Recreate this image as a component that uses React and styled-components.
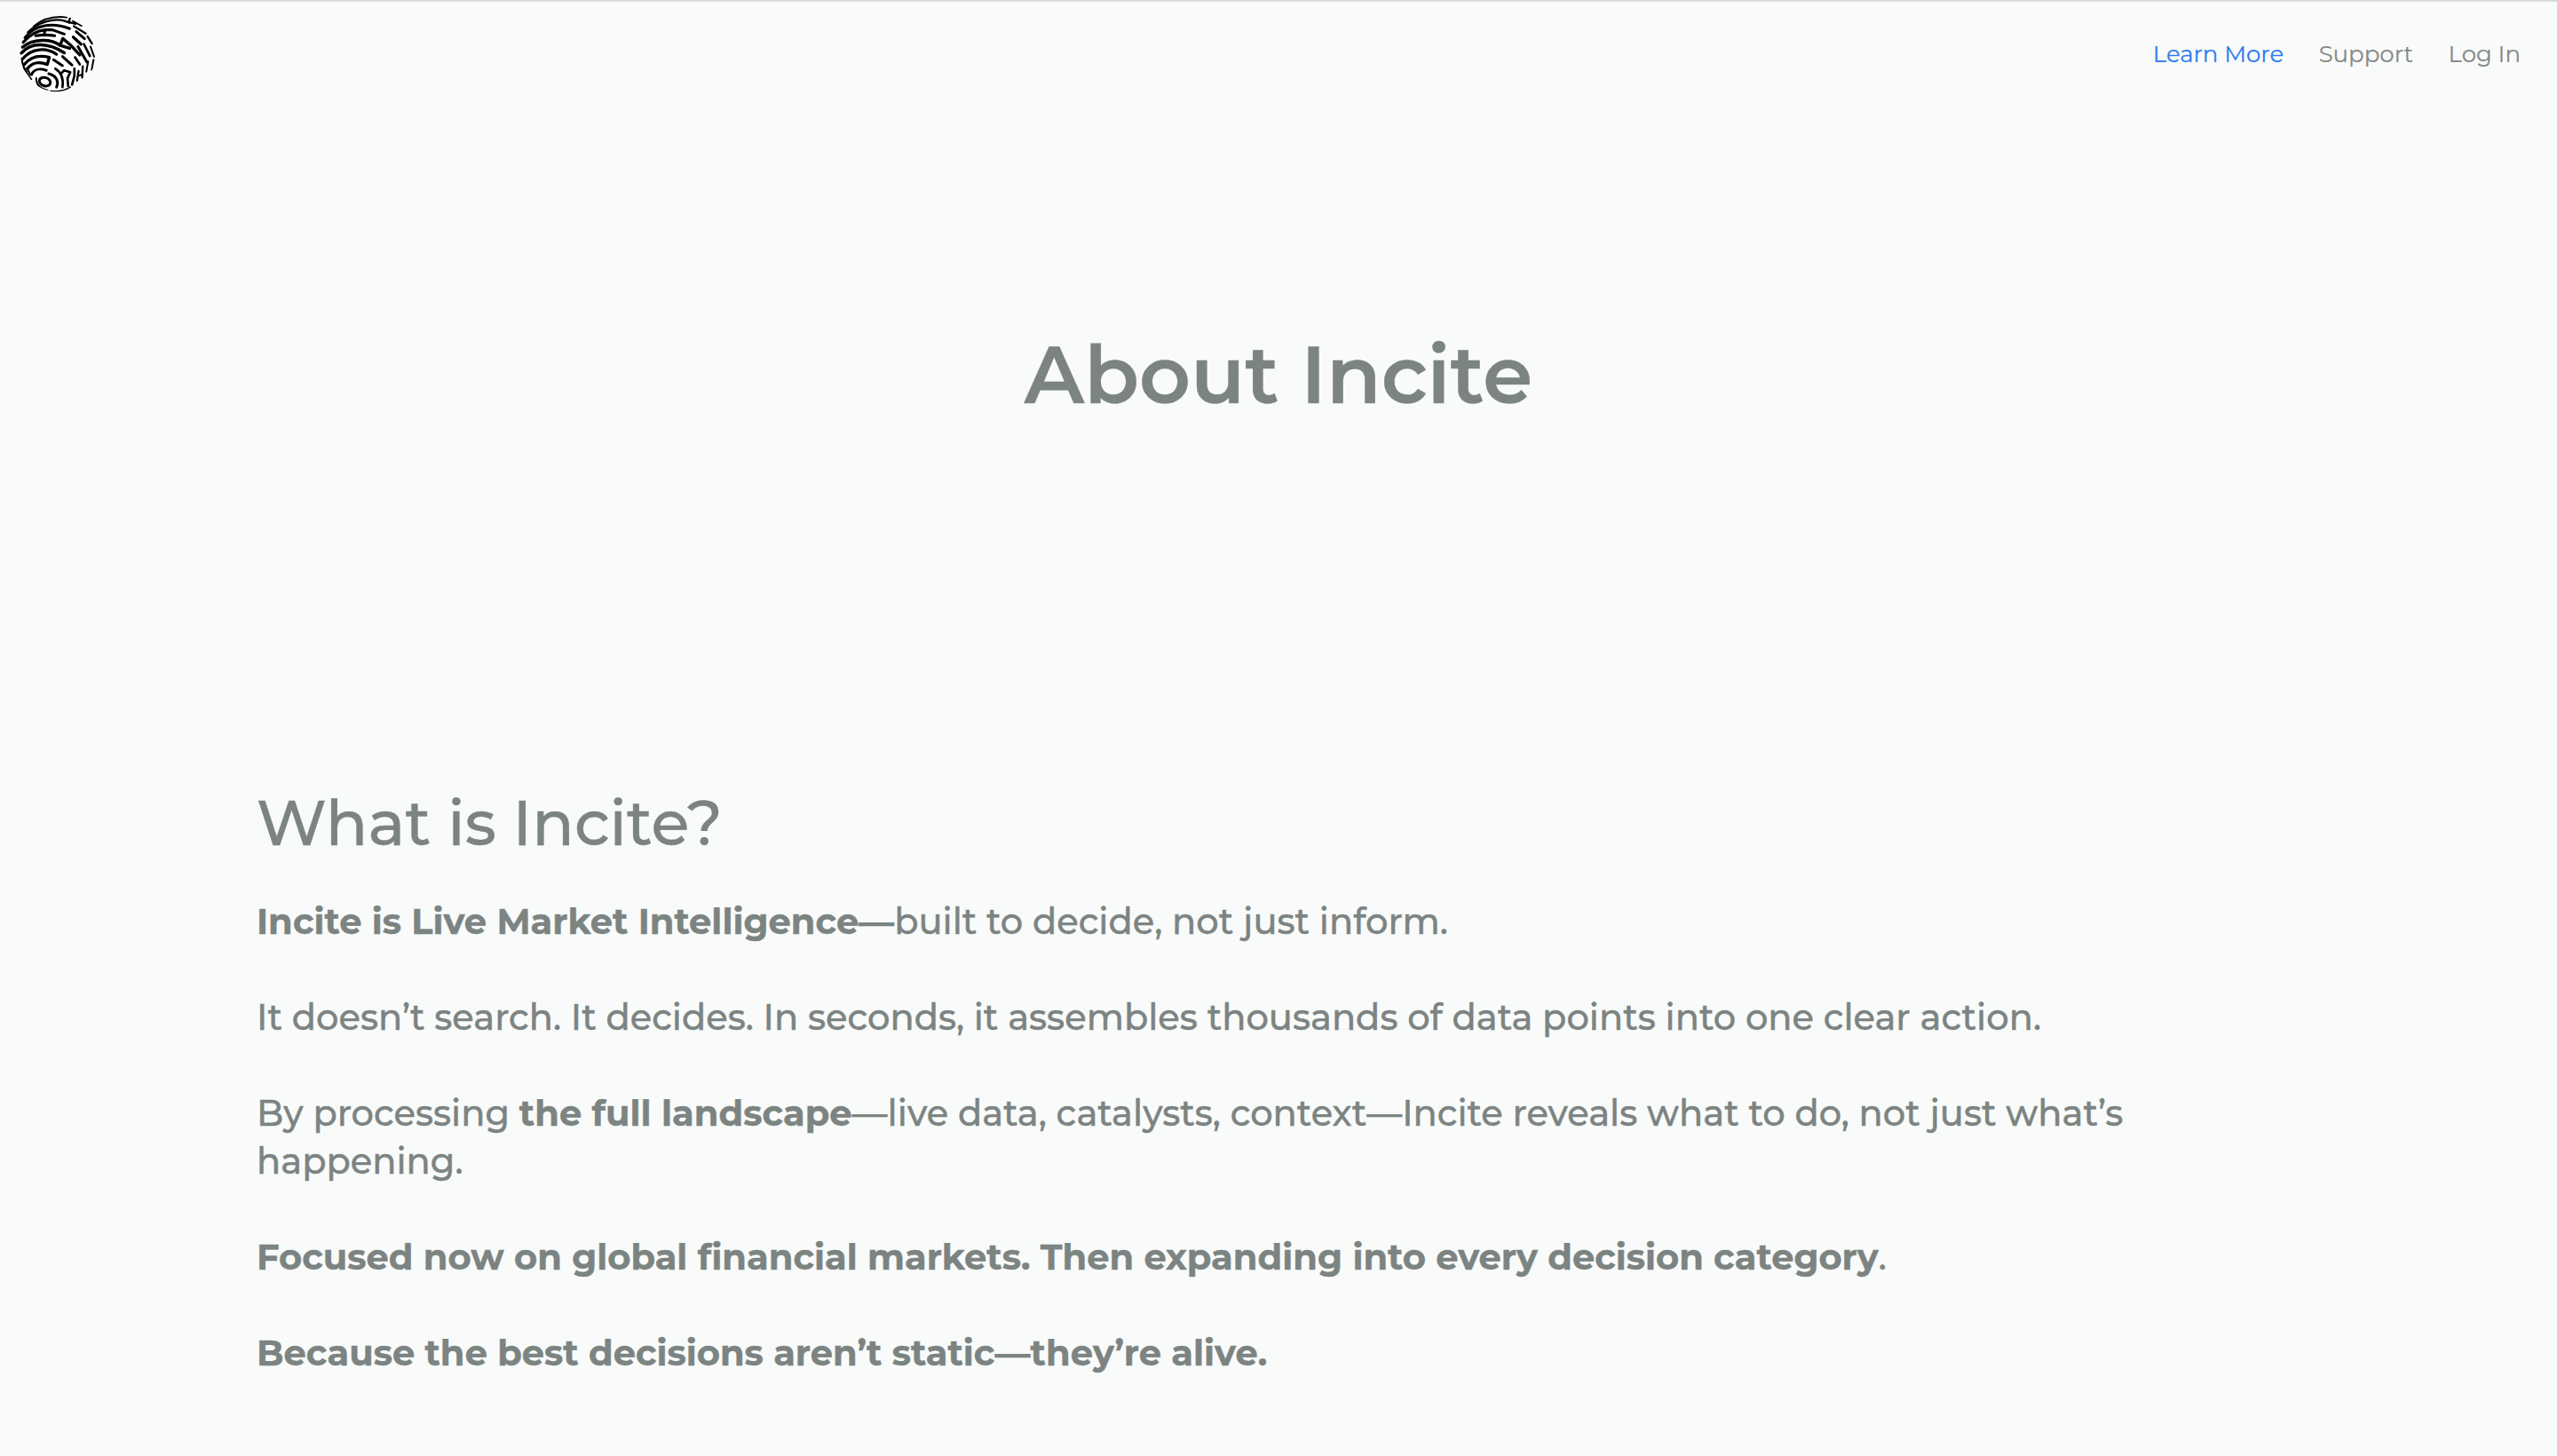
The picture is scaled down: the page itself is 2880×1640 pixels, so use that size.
import styled, { createGlobalStyle } from 'styled-components';

const strokes = [
    // top bands
    ['M84 88 C112 64 152 53 194 58', 6],
    ['M64 108 C98 74 150 60 188 70 L204 76', 7],
    ['M206 58 L201 74 L224 80', 7],
    ['M54 126 C88 82 146 74 204 96', 9],
    ['M48 142 C72 114 98 102 124 100 L146 100 L186 114', 9],
    ['M122 100 L118 118', 9],
    ['M90 120 C112 116 132 116 154 120', 9],
    ['M46 158 C80 130 140 128 172 152 L204 162', 10],
    ['M172 152 L181 129 L206 150 L238 184', 10],
    ['M42 178 C76 138 136 144 186 177', 10],
    ['M46 198 C78 158 128 160 160 182', 10],
    // lower left bands
    ['M52 216 C74 188 104 184 136 192 L129 216 C108 208 84 204 62 230', 10],
    ['M76 250 C84 232 104 228 126 236', 9],
    ['M44 196 C44 212 50 226 60 242', 6],
    ['M50 228 L76 266', 5],
    ['M62 230 L72 250', 6],
    ['M134 247 C162 254 168 276 160 292', 9],
    ['M92 262 C92 284 106 298 130 303', 6],
    // right side
    ['M150 200 L180 220', 9],
    ['M180 189 L212 218', 9],
    ['M156 230 C176 242 184 262 180 292', 8],
    ['M176 246 L185 236 L206 242 L197 262 L199 288', 8],
    ['M222 192 L238 216', 8],
    ['M216 124 L242 148', 10],
    ['M226 106 L254 130', 9],
    ['M218 88 L258 112', 7],
    ['M214 70 L244 87', 5],
    ['M232 156 L262 208', 9],
    ['M252 148 L272 188', 8],
    ['M264 122 L279 146', 7],
    ['M274 156 L286 190', 6],
    ['M284 200 L278 234', 6],
    ['M220 230 L220 254 L212 284', 8],
    ['M248 222 L246 260', 7],
    ['M234 238 L229 270', 7],
    ['M233 254 L246 250', 6],
    ['M266 206 L260 240', 6],
    ['M140 305 C168 308 190 302 206 292', 5],
];

function Logo() {
    return (
        <svg viewBox="36 51 256 258" fill="none" stroke="#000" strokeLinecap="round" strokeLinejoin="round">
            <clipPath id="ball"><circle cx="164" cy="180" r="128" /></clipPath>
            <circle cx="164" cy="180" r="122" fill="#fff" stroke="none" />
            <g clipPath="url(#ball)">
                {strokes.map(([d, w]) => <path key={d} d={d} strokeWidth={w} />)}
                <ellipse cx="121" cy="274" rx="19" ry="14" transform="rotate(18 121 274)" strokeWidth="9" />
            </g>
        </svg>
    )
}

export default function App() {
    return (
        <Page>
            <GlobalStyle />
            <Header>
                <Brand href="#"><Logo /></Brand>
                <Nav>
                    <NavLink href="#" $active>Learn More</NavLink>
                    <NavLink href="#">Support</NavLink>
                    <NavLink href="#">Log In</NavLink>
                </Nav>
            </Header>
            <Hero>
                <h1>About Incite</h1>
            </Hero>
            <Section>
                <h2>What is Incite?</h2>
                <p><strong>Incite is Live Market Intelligence—</strong>built to decide, not just inform.</p>
                <p>It doesn’t search. It decides. In seconds, it assembles thousands of data points into one clear action.</p>
                <p>By processing <strong>the full landscape</strong>—live data, catalysts, context—Incite reveals what to do, not just what’s happening.</p>
                <p><strong>Focused now on global financial markets. Then expanding into every decision category</strong>.</p>
                <p><strong>Because the best decisions aren’t static—they’re alive.</strong></p>
            </Section>
        </Page>
    )
}

const GlobalStyle = createGlobalStyle`
    * {
        box-sizing: border-box;
        margin: 0;
        padding: 0;
    }

    body {
        background-color: #f9fbfa;
        color: #7c8482;
        font-family: Montserrat, Inter, sans-serif;
    }
`

const Page = styled.div`
    height: 1640px;
    overflow: hidden;
    border-top: 2px solid #dadcdb;
`

const Header = styled.header`
    display: flex;
    justify-content: space-between;
    align-items: center;
    height: 118px;
    padding: 0 41px 0 22px;
`

const Brand = styled.a`
    width: 86px;
    height: 87px;
    margin-bottom: 2px;

    svg {
        display: block;
        width: 100%;
        height: 100%;
    }
`

const Nav = styled.nav`
    display: flex;
    gap: 39.5px;
`

const NavLink = styled.a`
    color: ${props => props.$active ? "#2f7bf0" : "#868988"};
    font-size: 26px;
    line-height: 32px;
    text-decoration: none;
    -webkit-text-stroke: 0.2px;
`

const Hero = styled.div`
    padding: 247px 0 407px;
    text-align: center;

    h1 {
        font-size: 90px;
        font-weight: 600;
        line-height: 110px;
        -webkit-text-stroke: 0.4px;
    }
`

const Section = styled.section`
    padding: 0 288px 0 289px;

    h2 {
        margin-bottom: 41px;
        font-size: 70px;
        font-weight: 500;
        line-height: 86px;
        -webkit-text-stroke: 0.4px;
    }

    p {
        margin-bottom: 54px;
        font-size: 40px;
        font-weight: 500;
        line-height: 54px;
        -webkit-text-stroke: 0.4px;
    }

    strong {
        font-weight: 700;
    }
`
